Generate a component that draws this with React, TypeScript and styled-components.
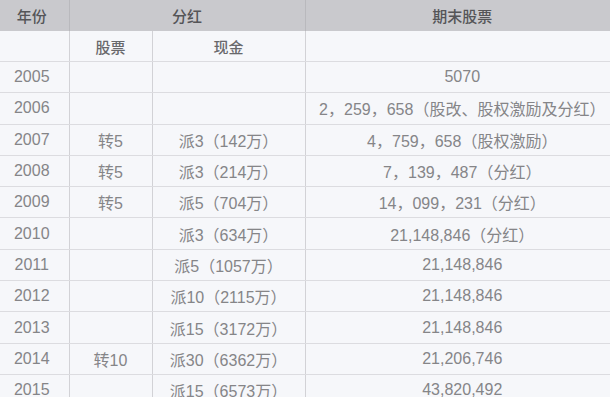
import React from "react";
import styled, { createGlobalStyle } from "styled-components";

const Global = createGlobalStyle`
  html, body { margin: 0; padding: 0; background: #ffffff; }
  body { width: 610px; height: 400px; overflow: hidden; }
`;

const Frame = styled.div`
  width: 610px;
  height: 397px;
  overflow: hidden;
  background: #f6f7fa;
`;

const Table = styled.table`
  width: 619px;
  table-layout: fixed;
  border-collapse: collapse;
  font-family: "Liberation Sans", "Noto Sans CJK SC", sans-serif;
`;

const Col = styled.col<{ $w: number }>`
  width: ${(p) => p.$w}px;
`;

const HeadCell = styled.th`
  height: 31px;
  padding: 0;
  background: #c9c9cd;
  color: #555558;
  font-size: 15px;
  font-weight: 500;
  text-align: center;
  border-left: 1px solid #b9b9bd;
  &:first-child { border-left: none; padding-right: 5px; }
`;

const SubCell = styled.th`
  height: 30px;
  padding: 0;
  color: #68686b;
  font-size: 15px;
  font-weight: 500;
  text-align: center;
  border-left: 1px solid #d2d2d6;
  border-bottom: 1px solid #dcdce0;
  &:first-child { border-left: none; padding-right: 5px; }
`;

const Cell = styled.td`
  height: 30.3px;
  padding: 0;
  color: #858588;
  font-size: 16px;
  text-align: center;
  white-space: nowrap;
  border-left: 1px solid #d2d2d6;
  border-bottom: 1px solid #dcdce0;
  &:first-child { border-left: none; padding-right: 5px; }
`;

type Row = [string, string, string, string];

const rows: Row[] = [
  ["2005", "", "", "5070"],
  ["2006", "", "", "2，259，658（股改、股权激励及分红）"],
  ["2007", "转5", "派3（142万）", "4，759，658（股权激励）"],
  ["2008", "转5", "派3（214万）", "7，139，487（分红）"],
  ["2009", "转5", "派5（704万）", "14，099，231（分红）"],
  ["2010", "", "派3（634万）", "21,148,846（分红）"],
  ["2011", "", "派5（1057万）", "21,148,846"],
  ["2012", "", "派10（2115万）", "21,148,846"],
  ["2013", "", "派15（3172万）", "21,148,846"],
  ["2014", "转10", "派30（6362万）", "21,206,746"],
  ["2015", "", "派15（6573万）", "43,820,492"],
];

export default function App() {
  return (
    <>
      <Global />
      <Frame>
        <Table>
          <colgroup>
            <Col $w={69} />
            <Col $w={83} />
            <Col $w={153} />
            <Col $w={314} />
          </colgroup>
          <thead>
            <tr>
              <HeadCell>年份</HeadCell>
              <HeadCell colSpan={2}>分红</HeadCell>
              <HeadCell>期末股票</HeadCell>
            </tr>
            <tr>
              <SubCell />
              <SubCell>股票</SubCell>
              <SubCell>现金</SubCell>
              <SubCell />
            </tr>
          </thead>
          <tbody>
            {rows.map((r) => (
              <tr key={r[0]}>
                {r.map((c, i) => (
                  <Cell key={i}>{c}</Cell>
                ))}
              </tr>
            ))}
          </tbody>
        </Table>
      </Frame>
    </>
  );
}
